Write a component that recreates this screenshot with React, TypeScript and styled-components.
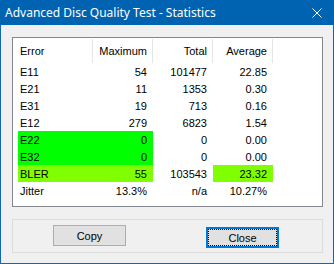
import React from "react";
import styled, { createGlobalStyle } from "styled-components";

const GlobalStyle = createGlobalStyle`
  html, body {
    margin: 0;
    padding: 0;
    background: #f0f0f0;
  }
`;

type Row = {
  name: string;
  max: string;
  total: string;
  avg: string;
  lead?: string;
  avgColor?: string;
};

const rows: Row[] = [
  { name: "E11", max: "54", total: "101477", avg: "22.85" },
  { name: "E21", max: "11", total: "1353", avg: "0.30" },
  { name: "E31", max: "19", total: "713", avg: "0.16" },
  { name: "E12", max: "279", total: "6823", avg: "1.54" },
  { name: "E22", max: "0", total: "0", avg: "0.00", lead: "#00ff00" },
  { name: "E32", max: "0", total: "0", avg: "0.00", lead: "#00ff00" },
  { name: "BLER", max: "55", total: "103543", avg: "23.32", lead: "#80ff00", avgColor: "#80ff00" },
  { name: "Jitter", max: "13.3%", total: "n/a", avg: "10.27%" },
];

const App = () => {
  return (
    <>
      <GlobalStyle />
      <Window>
        <TitleBar>
          <span>Advanced Disc Quality Test - Statistics</span>
          <svg width="10" height="10" viewBox="0 0 10 10">
            <path d="M0.5 0.5 L9.5 9.5 M9.5 0.5 L0.5 9.5" stroke="#fff" strokeWidth="1" />
          </svg>
        </TitleBar>
        <Body>
          <ListBox>
            <HeaderRow>
              <HeadCell $first>Error</HeadCell>
              <HeadCell>Maximum</HeadCell>
              <HeadCell>Total</HeadCell>
              <HeadCell>Average</HeadCell>
            </HeaderRow>
            {rows.map((r) => (
              <DataRow key={r.name}>
                <Cell $first $bg={r.lead}>{r.name}</Cell>
                <Cell $bg={r.lead}>{r.max}</Cell>
                <Cell>{r.total}</Cell>
                <Cell $bg={r.avgColor}>{r.avg}</Cell>
              </DataRow>
            ))}
          </ListBox>
          <ButtonGroup>
            <Button>Copy</Button>
            <Button $focused>Close</Button>
          </ButtonGroup>
        </Body>
      </Window>
    </>
  );
};

export default App;

const Window = styled.div`
  width: 334px;
  height: 264px;
  box-sizing: border-box;
  border: 1px solid #1565b5;
  border-top: none;
  background: #f0f0f0;
  display: flex;
  flex-direction: column;
  font-family: "Liberation Sans", Arial, sans-serif;
  font-size: 11px;
  color: #000;
`;

const TitleBar = styled.div`
  height: 25px;
  margin: 0 -1px;
  background: #0063b1;
  color: #fff;
  font-family: "Noto Sans", "Open Sans", sans-serif;
  font-size: 12px;
  display: flex;
  align-items: center;
  justify-content: space-between;
  padding: 0 12px 0 5px;
  box-sizing: border-box;

  svg {
    display: block;
  }
`;

const Body = styled.div`
  padding: 12px 10px 0 11px;
  display: flex;
  flex-direction: column;
  gap: 12px;
`;

const ListBox = styled.div`
  height: 170px;
  box-sizing: border-box;
  border: 1px solid #828790;
  background: #fff;
`;

const HeaderRow = styled.div`
  display: grid;
  grid-template-columns: 80px 60px 60px 60px;
  height: 25px;
`;

const HeadCell = styled.div<{ $first?: boolean }>`
  margin-top: 1px;
  border-right: 1px solid #e5e5e5;
  display: flex;
  align-items: center;
  justify-content: ${(p) => (p.$first ? "flex-start" : "flex-end")};
  padding: ${(p) => (p.$first ? "0 0 0 7px" : "0 5px 0 0")};
`;

const DataRow = styled.div`
  display: grid;
  grid-template-columns: 75px 60px 60px 60px;
  padding-left: 5px;
  height: 17px;
`;

const Cell = styled.div<{ $first?: boolean; $bg?: string }>`
  background: ${(p) => p.$bg || "transparent"};
  display: flex;
  align-items: center;
  justify-content: ${(p) => (p.$first ? "flex-start" : "flex-end")};
  padding: ${(p) => (p.$first ? "0 0 0 2px" : "0 6px 0 0")};
  white-space: nowrap;
`;

const ButtonGroup = styled.div`
  height: 34px;
  box-sizing: border-box;
  border: 1px solid #dcdcdc;
  display: flex;
  align-items: flex-start;
  padding: 5px 0 0 40px;
  gap: 80px;
`;

const Button = styled.button<{ $focused?: boolean }>`
  width: 73px;
  height: 21px;
  box-sizing: border-box;
  margin-top: ${(p) => (p.$focused ? "2px" : "0")};
  background: #e1e1e1;
  border: ${(p) => (p.$focused ? "2px solid #0078d7" : "1px solid #adadad")};
  outline: ${(p) => (p.$focused ? "1px dotted #000" : "none")};
  outline-offset: -3px;
  font-family: "Liberation Sans", Arial, sans-serif;
  font-size: 11px;
  color: #000;
  padding: 0;
`;
